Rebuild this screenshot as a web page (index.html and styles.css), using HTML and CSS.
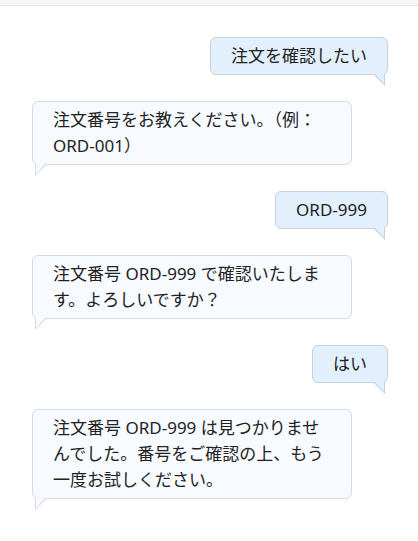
FILE: index.html
```html
<!DOCTYPE html>
<html lang="ja">
<head>
	<meta charset="UTF-8">
	<title>チャット</title>
	<link rel="stylesheet" href="styles.css">
</head>
<body>
	<div class="topbar"></div>
	<div class="chat">
		<div class="msg user">注文を確認したい</div>
		<div class="msg bot">注文番号をお教えください。（例：ORD-001）</div>
		<div class="msg user">ORD-999</div>
		<div class="msg bot">注文番号 ORD-999 で確認いたします。よろしいですか？</div>
		<div class="msg user">はい</div>
		<div class="msg bot">注文番号 ORD-999 は見つかりませんでした。番号をご確認の上、もう一度お試しください。</div>
	</div>
</body>
</html>
```

FILE: styles.css
```css
*{margin:0;padding:0;box-sizing:border-box;}
body{background:#fff;font-family:"Noto Sans","Noto Sans CJK JP",sans-serif;color:#222;}
.topbar{height:6px;background:#f7f7f7;border-bottom:1px solid #e6e6e6;}
.chat{display:flex;flex-direction:column;gap:26px;padding:31px 30px 20px 32px;}
.msg{position:relative;max-width:90%;padding:5px 20px;font-size:17px;line-height:26px;border:1px solid #d6dbe1;border-radius:6px;}
.user{align-self:flex-end;background:#e2effc;border-color:#c8d0d9;}
.bot{align-self:flex-start;background:#f7faff;}

/* tails */
.msg::before,.msg::after{content:"";position:absolute;top:100%;width:12px;height:12px;}
.user::before{right:2px;background:#c8d0d9;clip-path:polygon(0 0,100% 0,100% 100%);}
.user::after{right:3px;margin-top:-1px;width:10px;height:11px;background:#e2effc;clip-path:polygon(0 0,100% 0,100% 100%);}
.bot::before{left:2px;background:#d6dbe1;clip-path:polygon(0 0,100% 0,0 100%);}
.bot::after{left:3px;margin-top:-1px;width:10px;height:11px;background:#f7faff;clip-path:polygon(0 0,100% 0,0 100%);}
```
